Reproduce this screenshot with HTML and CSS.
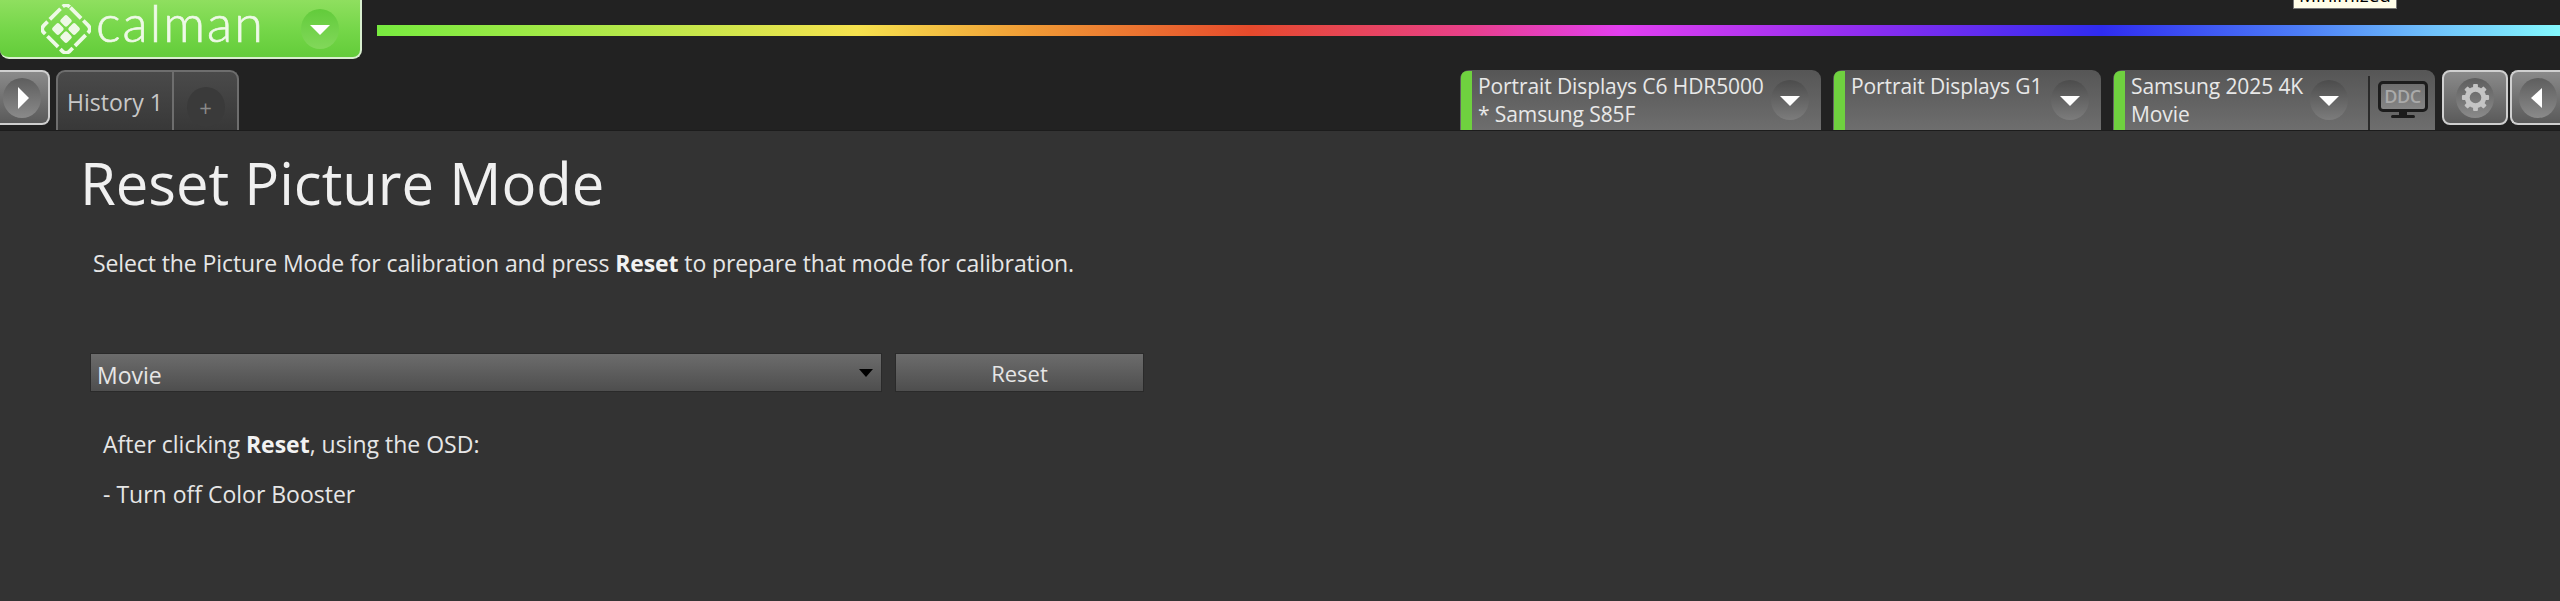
FILE: index.html
```html
<!DOCTYPE html>
<html lang="en">
<head>
<meta charset="utf-8">
<title>Calman - Reset Picture Mode</title>
<link rel="stylesheet" href="styles.css">
</head>
<body>
<header class="header">
  <div class="top-row">
    <div class="logo">
      <svg class="logo-mark" viewBox="0 0 48 48" aria-hidden="true">
        <g transform="rotate(45 24 24)">
          <rect x="6.5" y="6.5" width="35" height="35" rx="5" class="mark-frame"/>
          <rect x="14" y="14" width="9" height="9" rx="2" class="mark-dot"/>
          <rect x="25" y="14" width="9" height="9" rx="2" class="mark-dot"/>
          <rect x="14" y="25" width="9" height="9" rx="2" class="mark-dot"/>
          <rect x="25" y="25" width="9" height="9" rx="2" class="mark-dot"/>
        </g>
      </svg>
      <span class="logo-text">calman</span>
      <span class="round round-green"><span class="tri-down"></span></span>
    </div>
    <div class="rainbow"></div>
  </div>
  <div class="tab-row">
    <button class="side-btn side-left"><span class="round round-grey"><span class="tri-right"></span></span></button>
    <div class="history-tab">
      <span class="history-label">History 1</span>
      <span class="history-add"><span class="round round-dark">+</span></span>
    </div>
    <div class="devices">
      <div class="device device-one">
        <div class="device-text"><div>Portrait Displays C6 HDR5000</div><div>* Samsung S85F</div></div>
        <span class="round round-tab"><span class="tri-down"></span></span>
      </div>
      <div class="device device-two">
        <div class="device-text"><div>Portrait Displays G1</div></div>
        <span class="round round-tab"><span class="tri-down"></span></span>
      </div>
      <div class="device device-three">
        <div class="device-text"><div>Samsung 2025 4K</div><div>Movie</div></div>
        <span class="round round-tab"><span class="tri-down"></span></span>
        <div class="ddc">
          <div class="ddc-screen">DDC</div>
          <div class="ddc-neck"></div>
          <div class="ddc-foot"></div>
        </div>
      </div>
      <button class="side-btn side-gear">
        <span class="round round-grey">
          <svg class="gear" viewBox="0 0 32 32" aria-hidden="true">
            <circle cx="16" cy="16" r="8.5" class="gear-ring"/>
            <g class="gear-teeth">
              <rect x="13.5" y="2" width="5" height="6" rx="1"/>
              <rect x="13.5" y="2" width="5" height="6" rx="1" transform="rotate(45 16 16)"/>
              <rect x="13.5" y="2" width="5" height="6" rx="1" transform="rotate(90 16 16)"/>
              <rect x="13.5" y="2" width="5" height="6" rx="1" transform="rotate(135 16 16)"/>
              <rect x="13.5" y="2" width="5" height="6" rx="1" transform="rotate(180 16 16)"/>
              <rect x="13.5" y="2" width="5" height="6" rx="1" transform="rotate(225 16 16)"/>
              <rect x="13.5" y="2" width="5" height="6" rx="1" transform="rotate(270 16 16)"/>
              <rect x="13.5" y="2" width="5" height="6" rx="1" transform="rotate(315 16 16)"/>
            </g>
          </svg>
        </span>
      </button>
      <button class="side-btn side-right"><span class="round round-grey"><span class="tri-left"></span></span></button>
    </div>
  </div>
  <div class="tooltip"><span class="tooltip-text">Minimized</span></div>
</header>
<main class="main">
  <h1 class="title">Reset Picture Mode</h1>
  <p class="intro">Select the Picture Mode for calibration and press <b>Reset</b> to prepare that mode for calibration.</p>
  <div class="controls">
    <div class="select"><span>Movie</span><span class="select-arrow"></span></div>
    <button class="reset">Reset</button>
  </div>
  <p class="note note-first">After clicking <b>Reset</b>, using the OSD:</p>
  <p class="note note-second">- Turn off Color Booster</p>
</main>
</body>
</html>
```
FILE: styles.css
```css
* { box-sizing: border-box; }
html, body { margin: 0; height: 100%; }
body {
  background: #333333;
  color: #e6e6e6;
  font-family: "Open Sans", "Noto Sans", sans-serif;
  overflow: hidden;
}
button { font-family: inherit; padding: 0; }

.header {
  position: relative;
  height: 131px;
  background: #222222;
  border-bottom: 1px solid #1c1c1c;
  display: flex;
  flex-direction: column;
}
.top-row { display: flex; height: 70px; }
.logo {
  width: 362px;
  height: 59px;
  display: flex;
  align-items: center;
  background: linear-gradient(#8fdf5f 0%, #74d648 55%, #63cc3a 100%);
  border: 2px solid #d9efcf;
  border-width: 0 2px 2px 0;
  border-radius: 0 0 9px 9px;
}
.logo-mark { width: 50px; height: 50px; margin-left: 41px; flex: none; }
.mark-frame { fill: none; stroke: #eef9e7; stroke-width: 3.6; stroke-dasharray: 14.5 3; stroke-dashoffset: -1; }
.mark-dot { fill: #eef9e7; }
.logo-text {
  align-self: flex-start;
  margin: 7px 0 0 5px;
  width: 194px;
  height: 30px;
  font-family: "Lato", sans-serif;
  font-weight: 300;
  font-size: 52px;
  line-height: 30px;
  letter-spacing: 2px;
  -webkit-text-stroke: 0.7px #eef9e7;
  color: #eef9e7;
}
.round {
  width: 38px;
  height: 40px;
  flex: none;
  border-radius: 50%;
  display: flex;
  align-items: center;
  justify-content: center;
}
.round-green { background: linear-gradient(#62cb3b, #82d85a); margin-left: 11px; }
.round-grey { background: linear-gradient(#5e5e5e, #8a8a8a); }
.round-dark { background: #3a3a3a; color: #8a8a8a; font-size: 22px; }
.round-tab { background: linear-gradient(#4c4c4c, #7c7c7c); }

.tri-down { width: 0; height: 0; border: 10px solid transparent; border-top: 10px solid #fff; border-bottom: 0; margin-top: 2px; }
.tri-right { width: 0; height: 0; border: 11px solid transparent; border-left: 11px solid #fff; border-right: 0; margin-left: 3px; }
.tri-left { width: 0; height: 0; border: 10px solid transparent; border-right: 11px solid #fff; border-left: 0; margin-right: 3px; }

.rainbow {
  flex: 1;
  height: 11px;
  margin: 25px 0 0 15px;
  background: linear-gradient(90deg,
    #77ea3f 0%, #b8e84a 12%, #f6e24e 22%, #f09a35 30%, #e64a2c 40%,
    #e8408a 50%, #e23ff0 57%, #8f2df0 68%, #2f2cf0 79%, #4c7cf6 88%, #6fc0fb 94%, #84f8fd 100%);
}

.tab-row { display: flex; height: 60px; align-items: flex-start; }
.side-btn {
  height: 55px;
  background: linear-gradient(#8a8a8a, #5a5a5a);
  border: 2px solid #cfcfcf;
  border-radius: 8px;
  display: flex;
  align-items: center;
  flex: none;
}
.side-left { width: 50px; border-left: 0; border-radius: 0 8px 8px 0; padding-left: 3px; }
.history-tab {
  margin-left: 6px;
  width: 183px;
  height: 60px;
  display: flex;
  background: linear-gradient(#4a4a4a, #383838);
  border: 2px solid #6e6e6e;
  border-bottom: 0;
  border-radius: 9px 9px 0 0;
}
.history-label {
  width: 114px;
  padding: 14px 0 0 9px;
  font-size: 23px;
  line-height: 32px;
  color: #c8c8c8;
  white-space: nowrap;
}
.history-add {
  flex: 1;
  border-left: 2px solid #6e6e6e;
  display: flex;
  align-items: flex-start;
  justify-content: center;
  padding-top: 15px;
}

.devices { margin-left: auto; display: flex; align-items: flex-start; }
.device {
  height: 60px;
  display: flex;
  position: relative;
  background: linear-gradient(#565656, #6e6e6e);
  border-radius: 9px 9px 0 0;
  padding-left: 18px;
}
.device::before {
  content: "";
  position: absolute;
  left: 1px; top: 1px; bottom: 0;
  width: 11px;
  background: #6fd13f;
  border-radius: 6px 0 0 0;
}
.device-one { width: 361px; margin-right: 12px; }
.device-two { width: 268px; margin-right: 12px; }
.device-three { width: 322px; margin-right: 7px; }
.device-text {
  font-size: 21px;
  letter-spacing: -0.1px;
  line-height: 28px;
  padding-top: 2px;
  color: #e8e8e8;
  white-space: nowrap;
  flex: 1;
}
.device .round-tab { margin: 10px 12px 0 0; }
.device-three .round-tab { margin-right: 20px; }
.ddc {
  width: 67px;
  height: 54px;
  margin-top: 6px;
  border-left: 2px solid #2a2a2a;
  display: flex;
  flex-direction: column;
  align-items: center;
  padding-top: 5px;
}
.ddc-screen {
  width: 50px;
  height: 31px;
  border: 3px solid #1c1c1c;
  border-radius: 5px;
  background: linear-gradient(#6e6e6e, #858585);
  color: #aaaaaa;
  font-size: 18px;
  font-weight: 600;
  letter-spacing: -0.5px;
  line-height: 25px;
  text-align: center;
}
.ddc-neck { width: 8px; height: 3px; background: #1c1c1c; }
.ddc-foot { width: 24px; height: 3px; background: #1c1c1c; border-radius: 2px; }

.side-gear { width: 66px; justify-content: center; margin-right: 2px; }
.side-right { width: 50px; padding-left: 7px; border-right: 0; border-radius: 8px 0 0 8px; }
.gear { width: 31px; height: 31px; }
.gear-ring { fill: none; stroke: #c4c4c4; stroke-width: 5; }
.gear-teeth { fill: #c4c4c4; }

.tooltip {
  position: absolute;
  left: 2293px;
  top: 0;
  width: 104px;
  height: 9px;
  background: #fffde8;
  border: 1px solid #777;
  border-top: 0;
  overflow: hidden;
}
.tooltip-text {
  display: block;
  margin-top: -16px;
  font-size: 19px;
  line-height: 22px;
  color: #000;
  text-align: center;
}

.main { padding: 19px 0 0 80px; }
.title {
  margin: 0;
  font-size: 58px;
  font-weight: 400;
  line-height: 66px;
  color: #f0f0f0;
}
.intro {
  margin: 31px 0 0 13px;
  font-size: 23px;
  letter-spacing: -0.1px;
  line-height: 32px;
  white-space: nowrap;
}
b { font-weight: 700; color: #f2f2f2; }
.controls { display: flex; gap: 13px; margin: 74px 0 0 10px; }
.select {
  width: 792px;
  height: 39px;
  display: flex;
  align-items: center;
  justify-content: space-between;
  padding: 4px 8px 0 6px;
  background: linear-gradient(#6c6c6c, #4e4e4e);
  border: 1px solid #2a2a2a;
  font-size: 23px;
}
.select-arrow { width: 0; height: 0; border: 7px solid transparent; border-top: 8px solid #000; border-bottom: 0; margin-top: -4px; }
.reset {
  width: 249px;
  height: 39px;
  background: linear-gradient(#6c6c6c, #4e4e4e);
  border: 1px solid #2a2a2a;
  color: #e6e6e6;
  font-size: 22px;
  line-height: 30px;
}
.note { font-size: 23px; line-height: 32px; white-space: nowrap; margin: 0 0 0 23px; }
.note-first { margin-top: 36px; }
.note-second { margin-top: 18px; }
```
